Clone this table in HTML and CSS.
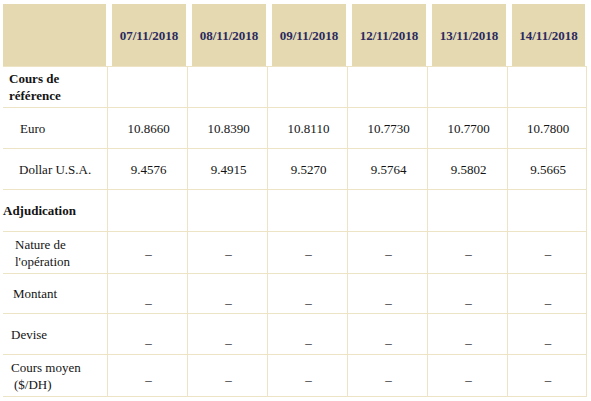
FILE: index.html
```html
<!DOCTYPE html>
<html lang="fr">
<head>
<meta charset="utf-8">
<title>Cours de référence</title>
<link rel="stylesheet" href="styles.css">
</head>
<body>
<table class="rates">
  <colgroup>
    <col class="c-label">
    <col class="c-day"><col class="c-day"><col class="c-day">
    <col class="c-day"><col class="c-day"><col class="c-last">
  </colgroup>
  <thead>
    <tr class="r-head">
      <th class="first"><div class="hbox"></div></th>
      <th><div class="hbox">07/11/2018</div></th>
      <th><div class="hbox">08/11/2018</div></th>
      <th><div class="hbox">09/11/2018</div></th>
      <th><div class="hbox">12/11/2018</div></th>
      <th><div class="hbox">13/11/2018</div></th>
      <th><div class="hbox">14/11/2018</div></th>
    </tr>
  </thead>
  <tbody>
    <tr class="r41">
      <td class="lbl b ind-cours">Cours de<br>référence</td>
      <td></td><td></td><td></td><td></td><td></td><td></td>
    </tr>
    <tr class="r41">
      <td class="lbl ind-euro">Euro</td>
      <td class="num">10.8660</td><td class="num">10.8390</td><td class="num">10.8110</td>
      <td class="num">10.7730</td><td class="num">10.7700</td><td class="num">10.7800</td>
    </tr>
    <tr class="r41">
      <td class="lbl ind-dollar">Dollar U.S.A.</td>
      <td class="num">9.4576</td><td class="num">9.4915</td><td class="num">9.5270</td>
      <td class="num">9.5764</td><td class="num">9.5802</td><td class="num">9.5665</td>
    </tr>
    <tr class="r42">
      <td class="lbl b ind-adj">Adjudication</td>
      <td></td><td></td><td></td><td></td><td></td><td></td>
    </tr>
    <tr class="r42 s-nature">
      <td class="lbl ind-nature">Nature de<br>l'opération</td>
      <td class="num dash">–</td><td class="num dash">–</td><td class="num dash">–</td>
      <td class="num dash">–</td><td class="num dash">–</td><td class="num dash">–</td>
    </tr>
    <tr class="r40 s-montant">
      <td class="lbl ind-montant">Montant</td>
      <td class="num dash">–</td><td class="num dash">–</td><td class="num dash">–</td>
      <td class="num dash">–</td><td class="num dash">–</td><td class="num dash">–</td>
    </tr>
    <tr class="r41 s-devise">
      <td class="lbl ind-devise">Devise</td>
      <td class="num dash">–</td><td class="num dash">–</td><td class="num dash">–</td>
      <td class="num dash">–</td><td class="num dash">–</td><td class="num dash">–</td>
    </tr>
    <tr class="r42 s-moyen">
      <td class="lbl ind-moyen">Cours moyen<br><span class="sub">($/DH)</span></td>
      <td class="num dash">–</td><td class="num dash">–</td><td class="num dash">–</td>
      <td class="num dash">–</td><td class="num dash">–</td><td class="num dash">–</td>
    </tr>
  </tbody>
</table>
</body>
</html>
```
FILE: styles.css
```css
html, body {
  margin: 0;
  padding: 0;
  background: #ffffff;
}

body {
  font-family: "Liberation Serif", "Times New Roman", serif;
  font-size: 13px;
  color: #141414;
}

.rates {
  margin: 4px 0 0 3px;
  width: 583px;
  table-layout: fixed;
  border-collapse: collapse;
}

.c-label { width: 104px; }
.c-day { width: 80px; }
.c-last { width: 79px; }

.rates th {
  padding: 0;
  border: none;
  vertical-align: top;
}

.hbox {
  height: 62px;
  margin: 0 1px 0 5px;
  background: #e4d9b1;
  color: #2b2960;
  font-weight: bold;
  font-size: 13px;
  line-height: 17px;
  display: flex;
  align-items: center;
  justify-content: center;
}

.rates th.first .hbox {
  margin: 0 1px 0 0;
}

.rates td {
  border: 1px solid #ece4c5;
  padding: 0;
  line-height: 17px;
  vertical-align: middle;
}

.rates td.lbl {
  border-left: none;
  text-align: left;
}

.r40 { height: 40px; }
.r41 { height: 41px; }
.r42 { height: 42px; }

.b { font-weight: bold; }

.num {
  text-align: center;
  padding-left: 3px !important;
}

.ind-cours { padding-left: 6px !important; }
.ind-euro { padding-left: 17px !important; }
.ind-dollar { padding-left: 16px !important; }
.ind-adj { padding-left: 0 !important; }
.ind-nature { padding-left: 12px !important; }
.ind-montant { padding-left: 10px !important; }
.ind-devise { padding-left: 8px !important; }
.ind-moyen { padding-left: 8px !important; }
.sub { padding-left: 3px; }

.s-nature .dash { padding-top: 2px !important; }
.s-montant .dash { padding-top: 18px !important; }
.s-devise .dash { padding-top: 17px !important; }
.s-moyen .dash { padding-top: 8px !important; }
```
